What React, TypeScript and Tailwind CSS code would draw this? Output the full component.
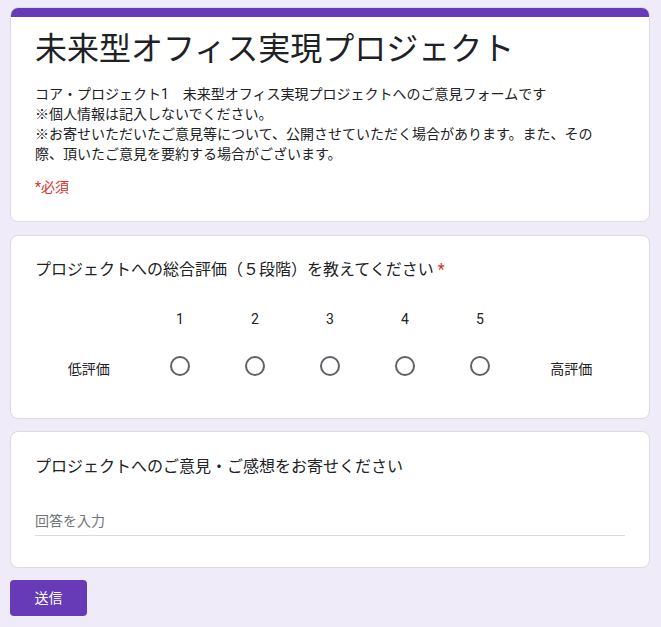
import React from "react";

const font = "font-['Roboto','Noto_Sans_CJK_JP',sans-serif]";

function Radio() {
  return <div className="w-[20px] h-[20px] rounded-full border-2 border-[#5f6368] box-border" />;
}

export default function App() {
  return (
    <div className={`min-h-[627px] w-full bg-[#f0ebf8] ${font} text-[#202124] pt-[7px] pb-[11px]`}>
      <div className="mx-[10px] w-[640px]">
        {/* Card 1 */}
        <div className="bg-white rounded-lg border border-[#dadce0] overflow-hidden">
          <div className="h-[10px] bg-[#673ab7] -mx-px -mt-px" />
          <div className="px-[24px] pt-[12px] pb-[24px]">
            <div className="text-[32px] leading-[40px] text-[#202124]">未来型オフィス実現プロジェクト</div>
            <div className="mt-[15px] text-[14px] leading-[20px] text-[#202124]">
              コア・プロジェクト1　未来型オフィス実現プロジェクトへのご意見フォームです
              <br />
              ※個人情報は記入しないでください。
              <br />
              ※お寄せいただいたご意見等について、公開させていただく場合があります。また、その
              <br />
              際、頂いたご意見を要約する場合がございます。
            </div>
            <div className="mt-[13px] text-[14px] leading-[20px] text-[#d93025]">*必須</div>
          </div>
        </div>

        {/* Card 2 */}
        <div className="mt-[13px] bg-white rounded-lg border border-[#dadce0] px-[24px] pt-[22px] pb-[28px]">
          <div className="text-[16px] leading-[24px] text-[#202124]">
            プロジェクトへの総合評価（５段階）を教えてください
            <span className="text-[#d93025] pl-[4px]">*</span>
          </div>
          <div className="mt-[27px] flex text-[14px] leading-[20px] text-[#202124]">
            <div className="flex-1" />
            {[1, 2, 3, 4, 5].map((n) => (
              <div key={n} className="w-[75px] text-center">
                {n}
              </div>
            ))}
            <div className="flex-1" />
          </div>
          <div className="mt-[13px] flex items-center h-[48px] text-[14px] leading-[20px]">
            <div className="flex-1 text-center translate-y-[3px]">低評価</div>
            {[1, 2, 3, 4, 5].map((n) => (
              <div key={n} className="w-[75px] flex justify-center">
                <Radio />
              </div>
            ))}
            <div className="flex-1 text-center translate-y-[3px]">高評価</div>
          </div>
        </div>

        {/* Card 3 */}
        <div className="mt-[12px] bg-white rounded-lg border border-[#dadce0] px-[24px] pt-[23px] pb-[31px]">
          <div className="text-[16px] leading-[24px] text-[#202124]">プロジェクトへのご意見・ご感想をお寄せください</div>
          <div className="mt-[32px] w-[590px] pb-[4px] border-b border-[#dadce0] text-[14px] leading-[20px] text-[#70757a]">
            回答を入力
          </div>
        </div>

        {/* Button */}
        <button className="mt-[12px] w-[77px] h-[36px] rounded-[4px] bg-[#673ab7] text-white text-[14px] leading-[20px] font-normal">
          送信
        </button>
      </div>
    </div>
  );
}
